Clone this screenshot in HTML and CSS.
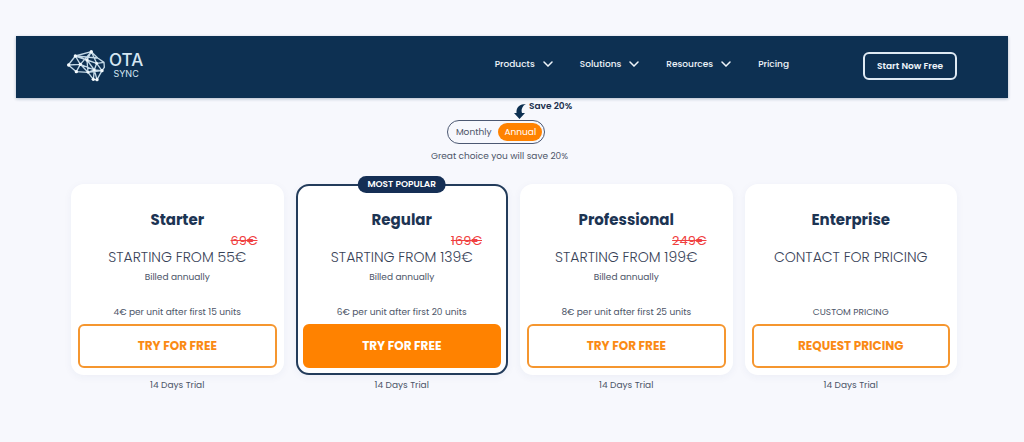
FILE: index.html
```html
<!DOCTYPE html>
<html lang="en">
<head>
<meta charset="utf-8">
<meta name="viewport" content="width=device-width, initial-scale=1">
<title>OTA Sync – Pricing</title>
<link rel="stylesheet" href="styles.css">
</head>
<body>
<header class="header">
  <a class="logo" href="#">
    <svg class="logo-mark" viewBox="0 0 114 96" aria-hidden="true">
      <path d="M4 45 25 18 73 5 92 24 111 37 112 52 105 62 90 89 79 88 63 67 28 65ZM4 45 40 43 25 18 60 30 73 5 89 40 111 37M25 18 92 24M73 5 40 43 28 65M40 43 63 67 60 30M40 43 82 60 60 30 89 40 82 60 63 67M89 40 105 62 82 60 90 89M63 67 105 62M82 60 79 88"/>
      <g class="logo-nodes"><circle cx="5" cy="45" r="5"/><circle cx="25" cy="18" r="5"/><circle cx="73" cy="5" r="5"/><circle cx="60" cy="30" r="5"/><circle cx="40" cy="43" r="5"/><circle cx="28" cy="65" r="5"/><circle cx="89" cy="40" r="4"/><circle cx="82" cy="60" r="4"/><circle cx="105" cy="62" r="5"/><circle cx="63" cy="67" r="4"/><circle cx="79" cy="88" r="5"/><circle cx="90" cy="89" r="5"/></g>
    </svg>
    <span class="logo-text"><span class="logo-name">OTA</span><span class="logo-sub">SYNC</span></span>
  </a>
  <nav class="nav">
    <button class="nav-item" type="button">Products <svg class="chevron" viewBox="0 0 10 6" aria-hidden="true"><path d="M1 1l4 4 4-4"/></svg></button>
    <button class="nav-item" type="button">Solutions <svg class="chevron" viewBox="0 0 10 6" aria-hidden="true"><path d="M1 1l4 4 4-4"/></svg></button>
    <button class="nav-item" type="button">Resources <svg class="chevron" viewBox="0 0 10 6" aria-hidden="true"><path d="M1 1l4 4 4-4"/></svg></button>
    <a class="nav-item" href="#">Pricing</a>
  </nav>
  <a class="header-cta" href="#">Start Now Free</a>
</header>
<main>
  <section class="billing">
    <div class="toggle" role="radiogroup" aria-label="Billing period">
      <input type="radio" name="period" id="monthly"><label for="monthly">Monthly</label>
      <input type="radio" name="period" id="annual" checked><label for="annual">Annual</label>
      <span class="callout">
        <svg class="callout-arrow" viewBox="0 0 12 15" aria-hidden="true"><path d="M12 0C6 0 2 3 2.500 9L0 9 5.500 15 11 9 8 9C7 6 8 2 12 0Z"/></svg>
        Save 20%
      </span>
    </div>
    <p class="billing-note">Great choice you will save 20%</p>
  </section>
  <section class="plans">
    <div class="plan">
      <article class="card">
        <h2>Starter</h2>
        <del class="old-price">69€</del>
        <p class="price">STARTING FROM 55€</p>
        <p class="detail">Billed annually</p>
        <p class="detail units">4€ per unit after first 15 units</p>
        <button class="cta" type="button">TRY FOR FREE</button>
      </article>
      <p class="trial">14 Days Trial</p>
    </div>
    <div class="plan">
      <article class="card popular">
        <span class="badge">MOST POPULAR</span>
        <h2>Regular</h2>
        <del class="old-price">169€</del>
        <p class="price">STARTING FROM 139€</p>
        <p class="detail">Billed annually</p>
        <p class="detail units">6€ per unit after first 20 units</p>
        <button class="cta" type="button">TRY FOR FREE</button>
      </article>
      <p class="trial">14 Days Trial</p>
    </div>
    <div class="plan">
      <article class="card">
        <h2>Professional</h2>
        <del class="old-price">249€</del>
        <p class="price">STARTING FROM 199€</p>
        <p class="detail">Billed annually</p>
        <p class="detail units">8€ per unit after first 25 units</p>
        <button class="cta" type="button">TRY FOR FREE</button>
      </article>
      <p class="trial">14 Days Trial</p>
    </div>
    <div class="plan">
      <article class="card">
        <h2>Enterprise</h2>
        <p class="price price-only">CONTACT FOR PRICING</p>
        <p class="detail units">CUSTOM PRICING</p>
        <button class="cta" type="button">REQUEST PRICING</button>
      </article>
      <p class="trial">14 Days Trial</p>
    </div>
  </section>
</main>
</body>
</html>
```
FILE: styles.css
```css
* {
  box-sizing: border-box;
}

body {
  margin: 0;
  padding: 36px 16px;
  background: #f7f8fd;
  color: #4c5568;
  font-family: Poppins, Inter, "Open Sans", sans-serif;
  font-size: 9px;
}

h2,
p {
  margin: 0;
}

a {
  color: inherit;
  text-decoration: none;
}

button {
  font: inherit;
  cursor: pointer;
}

.header {
  display: flex;
  align-items: center;
  padding: 14px 51px 16px;
  background: #0d3052;
  color: #eef4fa;
  box-shadow: 0 1px 3px rgba(13, 48, 82, 0.3);
}

.logo {
  display: flex;
  align-items: center;
  gap: 4px;
}

.logo-mark {
  width: 38px;
  height: 32px;
  fill: none;
  stroke: #c3d8e6;
  stroke-width: 4;
  stroke-linejoin: round;
}

.logo-nodes {
  fill: #f4fafd;
  stroke: none;
}

.logo-text {
  display: flex;
  flex-direction: column;
  align-items: center;
  color: #d5e6f2;
  font-family: Inter, sans-serif;
}

.logo-name {
  font-size: 17px;
  font-weight: 500;
  line-height: 16px;
}

.logo-sub {
  font-size: 9px;
  line-height: 12px;
}

.nav {
  display: flex;
  gap: 27px;
  margin: 0 74px 0 auto;
  padding-bottom: 4px;
}

.nav-item {
  display: flex;
  align-items: center;
  gap: 8px;
  padding: 0;
  border: 0;
  background: none;
  color: inherit;
  font-weight: 500;
  line-height: 16px;
}

.chevron {
  width: 10px;
  height: 6px;
  fill: none;
  stroke: currentColor;
  stroke-width: 1.5;
  stroke-linecap: round;
}

.header-cta {
  padding: 4px 12px;
  border: 2px solid #dfeaf4;
  border-radius: 6px;
  font-weight: 600;
  line-height: 16px;
}

.billing {
  display: flex;
  flex-direction: column;
  align-items: center;
  padding: 22px 32px 0 0;
}

.toggle {
  position: relative;
  display: flex;
  padding: 2px 2px 2px 8px;
  gap: 7px;
  border: 1px solid #4c5872;
  border-radius: 12px;
}

.toggle input {
  position: absolute;
  opacity: 0;
  pointer-events: none;
}

.toggle label {
  line-height: 18px;
  border-radius: 9px;
  cursor: pointer;
}

.toggle input:checked + label {
  padding: 0 6px;
  background: #ff8200;
  color: #fff;
}

.callout {
  position: absolute;
  right: -28px;
  bottom: 100%;
  display: flex;
  gap: 3px;
  color: #1b2f4d;
  font-weight: 600;
  line-height: 10px;
  padding-bottom: 2px;
  white-space: nowrap;
}

.callout-arrow {
  width: 12px;
  height: 15px;
  margin-top: 3px;
  fill: #0d3052;
}

.billing-note {
  padding-left: 7px;
  line-height: 24px;
}

.plans {
  display: grid;
  grid-template-columns: repeat(4, 1fr);
  gap: 12px;
  padding: 16px 51px 0 55px;
}

.plan {
  text-align: center;
}

.card {
  position: relative;
  display: flex;
  flex-direction: column;
  min-height: 191px;
  padding: 21px 5px 5px;
  border: 2px solid #fff;
  border-radius: 13px;
  background: #fff;
  box-shadow: 0 2px 8px rgba(40, 60, 110, 0.05);
}

.popular {
  border-color: #233c5b;
}

.badge {
  position: absolute;
  top: -10px;
  left: 50%;
  transform: translateX(-50%);
  padding: 0 10px;
  border-radius: 9px;
  background: #152f55;
  color: #fff;
  font-weight: 600;
  line-height: 17px;
  white-space: nowrap;
}

.card h2 {
  color: #1c3453;
  font-size: 15px;
  font-weight: 700;
  line-height: 26px;
}

.old-price {
  padding-right: 19px;
  color: #f04040;
  font-size: 13px;
  line-height: 16px;
  text-align: right;
}

.price {
  color: #384257;
  font-size: 14px;
  font-weight: 300;
  line-height: 16px;
}

.price-only {
  padding-top: 16px;
}

.detail {
  line-height: 24px;
}

.units {
  margin-top: auto;
}

.cta {
  height: 44px;
  border: 2px solid #f5962f;
  border-radius: 6px;
  background: #fff;
  color: #fa8a14;
  font-size: 12px;
  font-weight: 700;
}

.popular .cta {
  border-color: #ff8200;
  background: #ff8200;
  color: #fff;
}

.trial {
  line-height: 20px;
}
```
